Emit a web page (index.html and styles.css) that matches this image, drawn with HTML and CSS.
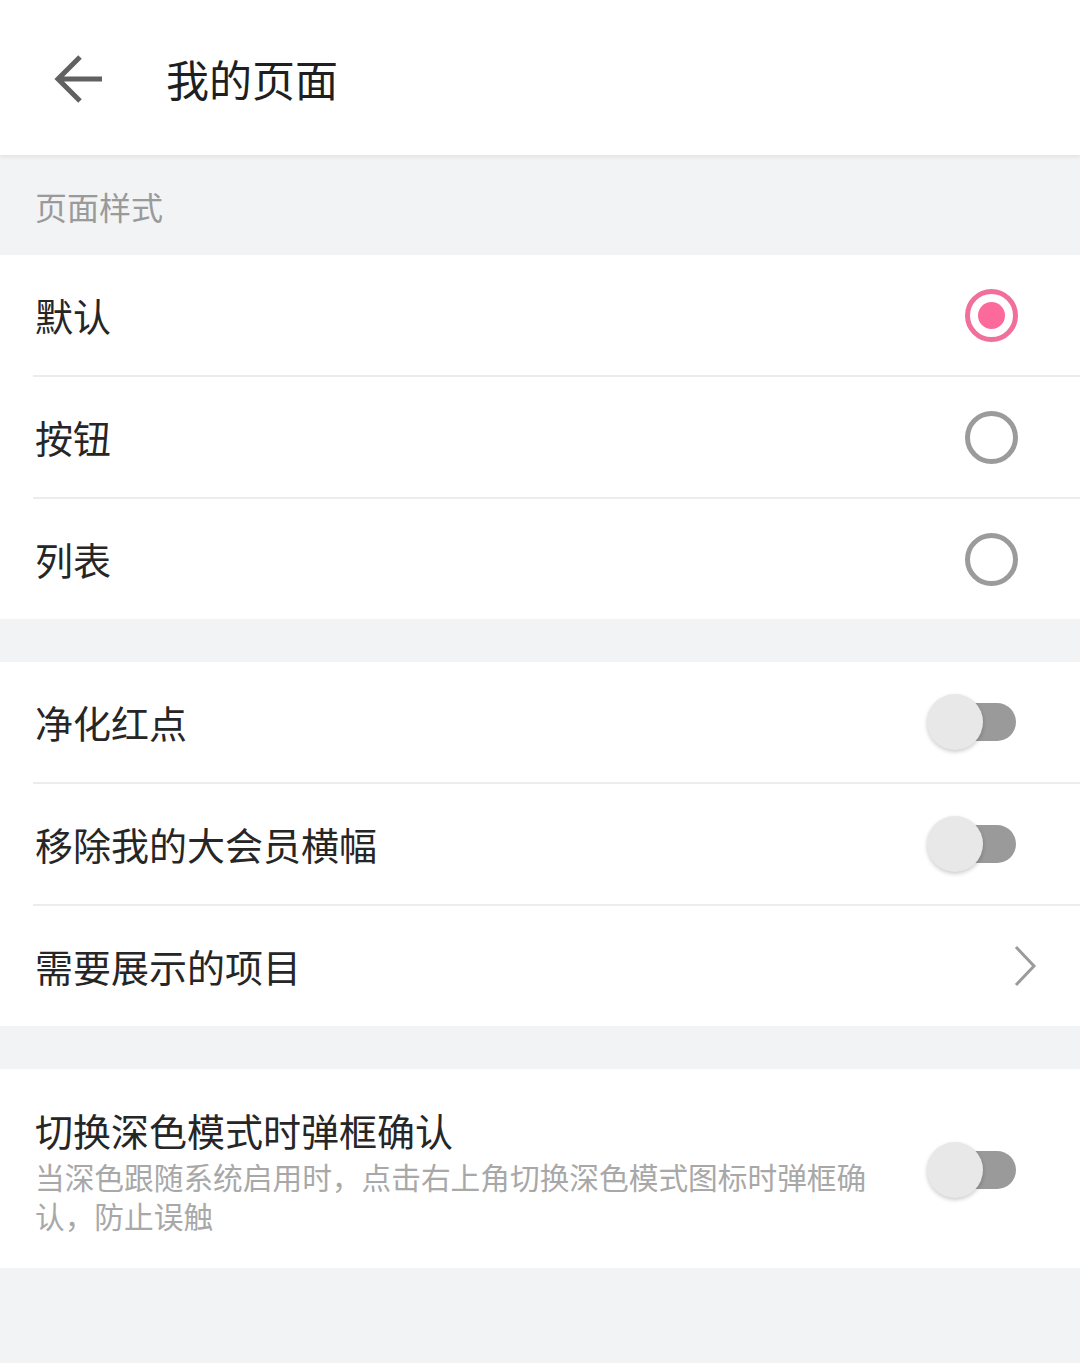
FILE: index.html
```html
<!DOCTYPE html>
<html lang="zh-CN">
<head>
    <meta charset="UTF-8">
    <meta name="viewport" content="width=device-width, initial-scale=1.0">
    <title>我的页面</title>
    <link rel="stylesheet" href="styles.css">
</head>
<body>
    <header class="topbar">
        <svg class="back" width="50" height="50" viewBox="0 0 50 50">
            <path d="M28 4 L6 26 L28 48 M6 26 L50 26" fill="none" stroke="#616161" stroke-width="5"/>
        </svg>
        <h1>我的页面</h1>
    </header>

    <div class="section-title">页面样式</div>
    <div class="group">
        <div class="row">
            <span class="label">默认</span>
            <span class="radio checked"></span>
        </div>
        <div class="row">
            <span class="label">按钮</span>
            <span class="radio"></span>
        </div>
        <div class="row">
            <span class="label">列表</span>
            <span class="radio"></span>
        </div>
    </div>

    <div class="spacer"></div>
    <div class="group">
        <div class="row">
            <span class="label">净化红点</span>
            <span class="switch"></span>
        </div>
        <div class="row">
            <span class="label">移除我的大会员横幅</span>
            <span class="switch"></span>
        </div>
        <div class="row">
            <span class="label">需要展示的项目</span>
            <svg class="chevron" width="24" height="44" viewBox="0 0 24 44">
                <path d="M3 3 L21 22 L3 41" fill="none" stroke="#9b9b9b" stroke-width="3"/>
            </svg>
        </div>
    </div>

    <div class="spacer"></div>
    <div class="group">
        <div class="row tall">
            <div class="text">
                <div class="label">切换深色模式时弹框确认</div>
                <div class="desc">当深色跟随系统启用时，点击右上角切换深色模式图标时弹框确认，防止误触</div>
            </div>
            <span class="switch"></span>
        </div>
    </div>
</body>
</html>
```

FILE: styles.css
```css
body {
    margin: 0;
    background-color: #f2f3f5;
    font-family: "Noto Sans CJK SC", "Noto Sans", sans-serif;
    color: #262626;
}
.topbar {
    display: flex;
    align-items: center;
    height: 155px;
    background: white;
    box-shadow: 0 2px 4px rgba(0,0,0,0.07);
    position: relative;
}
.back {
    margin-left: 52px;
    margin-right: 64px;
}
.topbar h1 {
    margin: 0;
    font-size: 43px;
    font-weight: normal;
    color: #1f1f1f;
}
.section-title {
    height: 100px;
    display: flex;
    align-items: center;
    padding-left: 35px;
    padding-top: 2px;
    box-sizing: border-box;
    font-size: 32px;
    color: #9a9a9a;
}
.spacer {
    height: 43px;
}
.group {
    background: white;
    padding-left: 33px;
}
.row {
    display: flex;
    align-items: center;
    justify-content: space-between;
    height: 122px;
    border-bottom: 2px solid #ececec;
    box-sizing: border-box;
    padding-left: 2px;
}
.row:last-child {
    border-bottom: none;
    height: 120px;
}
.label {
    font-size: 38px;
    line-height: 50px;
}
.radio {
    width: 53px;
    height: 53px;
    box-sizing: border-box;
    border: 5px solid #9b9b9b;
    border-radius: 50%;
    margin-right: 62px;
    display: flex;
    align-items: center;
    justify-content: center;
}
.radio.checked {
    border-color: #f0709b;
}
.radio.checked::after {
    content: "";
    width: 27px;
    height: 27px;
    border-radius: 50%;
    background: #fb6a9b;
}
.switch {
    position: relative;
    width: 60px;
    height: 38px;
    border-radius: 19px;
    background: #9a9a9a;
    margin-right: 64px;
}
.switch::before {
    content: "";
    position: absolute;
    left: -29px;
    top: -9px;
    width: 56px;
    height: 56px;
    border-radius: 50%;
    background: #e8e8e8;
    box-shadow: 0 2px 4px rgba(0,0,0,0.2);
}
.chevron {
    margin-right: 43px;
}
.row.tall {
    height: 199px;
    padding-top: 36px;
    padding-bottom: 33px;
    align-items: center;
}
.text {
    width: 862px;
}
.desc {
    margin-top: 2px;
    font-size: 29.7px;
    line-height: 39px;
    color: #a8a8a8;
}
```
